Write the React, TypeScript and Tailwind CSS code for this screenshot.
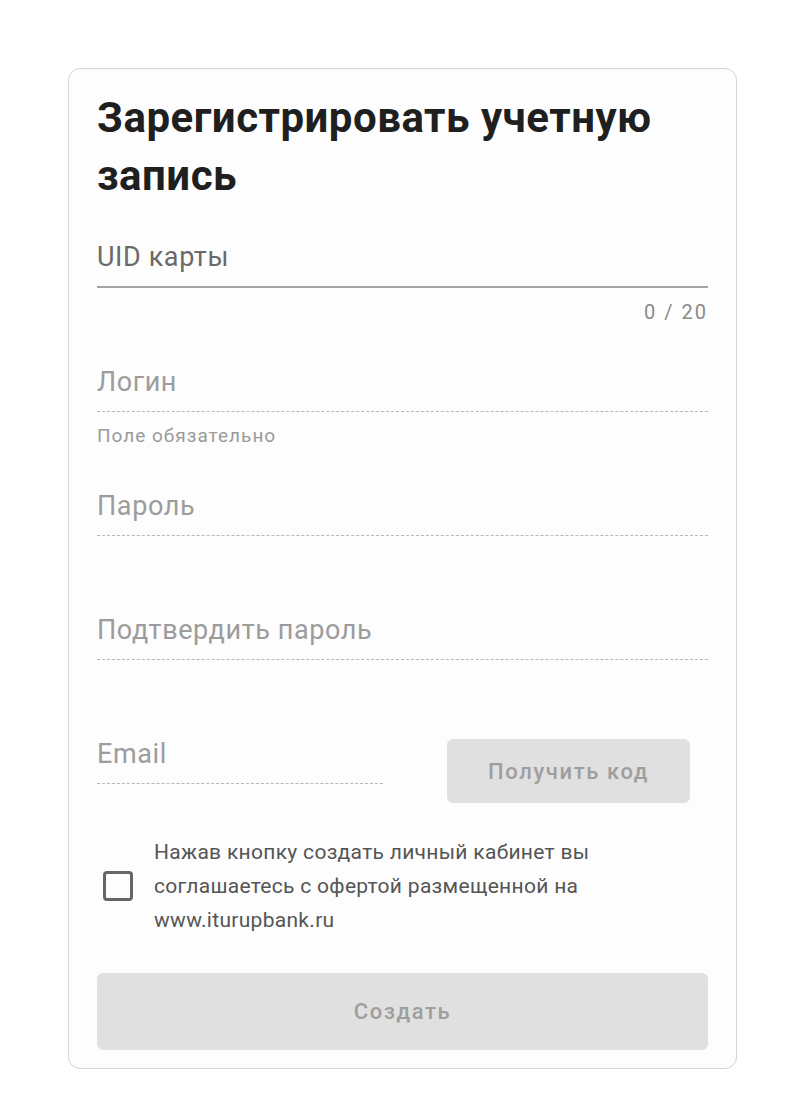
import React from "react";

const font = { fontFamily: "Roboto, 'Noto Sans', Arial, sans-serif" };

function Field({
  label,
  labelClass,
  solid,
  helper,
  helperRight,
}: {
  label: string;
  labelClass: string;
  solid?: boolean;
  helper?: string;
  helperRight?: string;
}) {
  return (
    <div className="flex flex-col">
      <div
        className={
          "h-[60px] flex items-end pb-[15px] " +
          (solid ? "border-b-2 border-[#a3a3a3]" : "border-b border-dashed border-[#b8b8b8]")
        }
      >
        <span className={"text-[27px] leading-[27px] tracking-[0.6px] " + labelClass}>{label}</span>
      </div>
      <div className="h-[64px] flex items-start pt-[14px]">
        {helper && (
          <span className="text-[19px] leading-[20px] tracking-[1px] text-[#9a9a9a]">{helper}</span>
        )}
        {helperRight && (
          <span className="ml-auto text-[20px] leading-[20px] tracking-[2px] text-[#8a8a8a]">
            {helperRight}
          </span>
        )}
      </div>
    </div>
  );
}

export default function App() {
  return (
    <div className="min-h-[1119px] w-[800px] bg-white pt-[68px] pl-[68px]" style={font}>
      <div className="w-[669px] h-[1001px] rounded-[12px] border border-[#d4d4d4] bg-[#fdfdfd] px-[28px] pt-[20px] flex flex-col">
        <h1 className="text-[42px] leading-[58px] font-bold text-[#1f1f1f] tracking-[0.5px]">
          Зарегистрировать учетную
          <br />
          запись
        </h1>
        <div className="mt-[23px]">
          <Field label="UID карты" labelClass="text-[#6a6a6a]" solid helperRight="0 / 20" />
          <Field label="Логин" labelClass="text-[#9c9c9c]" helper="Поле обязательно" />
          <Field label="Пароль" labelClass="text-[#9c9c9c]" />
          <Field label="Подтвердить пароль" labelClass="text-[#9c9c9c]" />
          <div className="flex items-start">
            <div className="w-[286px] h-[60px] flex items-end pb-[15px] border-b border-dashed border-[#b8b8b8]">
              <span className="text-[27px] leading-[27px] tracking-[0.6px] text-[#9c9c9c]">Email</span>
            </div>
            <button className="ml-[64px] mt-[15px] w-[243px] h-[64px] rounded-[6px] bg-[#e0e0e0] text-[22px] tracking-[1.6px] text-[#9e9e9e] font-medium">
              Получить код
            </button>
          </div>
        </div>
        <div className="mt-[32px] flex items-center">
          <div className="ml-[6px] w-[30px] h-[30px] rounded-[4px] border-[3px] border-[#666666]" />
          <p className="ml-[21px] text-[21px] leading-[34px] tracking-[0.3px] text-[#555555]">
            Нажав кнопку создать личный кабинет вы
            <br />
            соглашаетесь с офертой размещенной на
            <br />
            www.iturupbank.ru
          </p>
        </div>
        <button className="mt-[36px] w-full h-[77px] rounded-[6px] bg-[#e0e0e0] text-[22px] tracking-[1.6px] text-[#9e9e9e] font-medium">
          Создать
        </button>
      </div>
    </div>
  );
}
